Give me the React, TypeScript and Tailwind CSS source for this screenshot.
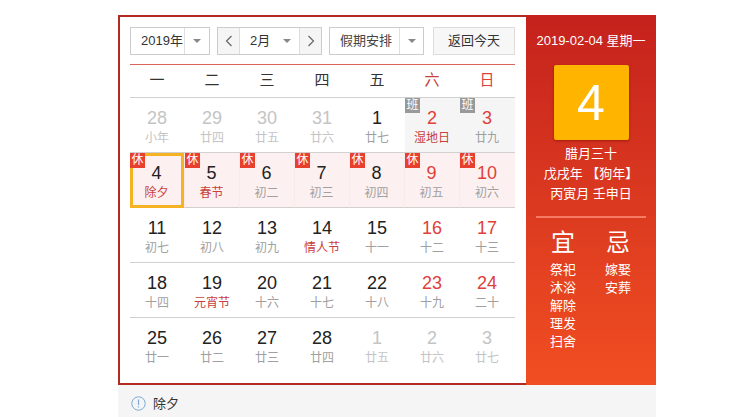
import React from "react";

type D = { n: number; l: string; dim?: boolean; red?: boolean; lr?: boolean; ban?: boolean; xiu?: boolean; sel?: boolean };

const days: D[] = [
  { n: 28, l: "小年", dim: true }, { n: 29, l: "廿四", dim: true }, { n: 30, l: "廿五", dim: true }, { n: 31, l: "廿六", dim: true },
  { n: 1, l: "廿七" }, { n: 2, l: "湿地日", red: true, lr: true, ban: true }, { n: 3, l: "廿九", red: true, ban: true },
  { n: 4, l: "除夕", lr: true, xiu: true, sel: true }, { n: 5, l: "春节", lr: true, xiu: true }, { n: 6, l: "初二", xiu: true }, { n: 7, l: "初三", xiu: true },
  { n: 8, l: "初四", xiu: true }, { n: 9, l: "初五", red: true, xiu: true }, { n: 10, l: "初六", red: true, xiu: true },
  { n: 11, l: "初七" }, { n: 12, l: "初八" }, { n: 13, l: "初九" }, { n: 14, l: "情人节", lr: true }, { n: 15, l: "十一" }, { n: 16, l: "十二", red: true }, { n: 17, l: "十三", red: true },
  { n: 18, l: "十四" }, { n: 19, l: "元宵节", lr: true }, { n: 20, l: "十六" }, { n: 21, l: "十七" }, { n: 22, l: "十八" }, { n: 23, l: "十九", red: true }, { n: 24, l: "二十", red: true },
  { n: 25, l: "廿一" }, { n: 26, l: "廿二" }, { n: 27, l: "廿三" }, { n: 28, l: "廿四" }, { n: 1, l: "廿五", dim: true }, { n: 2, l: "廿六", dim: true }, { n: 3, l: "廿七", dim: true },
];

const Caret = () => <span className="w-0 h-0 border-x-[4px] border-x-transparent border-t-[4px] border-t-[#888]" />;

function Cell({ d, i }: { d: D; i: number }) {
  const row = Math.floor(i / 7);
  const bg = d.xiu ? "bg-[#fdf0f0]" : d.ban ? "bg-[#f5f5f5]" : "bg-white";
  const num = d.dim ? "text-[#c4c4c4]" : d.red ? "text-[#e0403a]" : "text-[#222]";
  const lab = d.dim ? "text-[#c4c4c4]" : d.lr ? "text-[#c9403c]" : "text-[#a0a0a0]";
  return (
    <div className={`relative h-[55px] flex flex-col items-center pt-[10px] pr-[1px] ${bg} ${row < 4 ? "border-b border-[#d0d0d0]" : ""} ${d.xiu && i % 7 !== 6 ? "border-r border-r-[#fbeaea]" : ""}`}>
      <div className={`text-[18px] leading-[21px] ${num}`}>{d.n}</div>
      <div className={`text-[12px] leading-[16px] mt-[1px] whitespace-nowrap ${lab}`}>{d.l}</div>
      {d.sel && <div className="absolute left-0 top-0 w-[54px] h-[55px] border-[3px] border-[#f5b324]" />}
      {d.xiu && <div className="absolute left-0 top-0 w-[15px] h-[15px] bg-[#e8402f] text-white text-[12px] leading-[15px] text-center">休</div>}
      {d.ban && <div className="absolute left-0 top-0 w-[15px] h-[15px] bg-[#999] text-white text-[12px] leading-[15px] text-center">班</div>}
    </div>
  );
}

export default function App() {
  return (
    <div className="w-[746px] h-[417px] overflow-hidden bg-white pt-[15px] pl-[118px] font-['Liberation_Sans','Noto_Sans_CJK_SC',sans-serif]">
      <div className="w-[538px] flex h-[370px]">
        <div className="w-[408px] h-[370px] border-2 border-r-0 border-[#b22a22] pl-[10px] pr-[11px] pt-[10px]">
          <div className="h-[28px] flex items-stretch text-[13px] text-[#333]">
            <div className="w-[80px] flex border border-[#ccc] bg-white">
              <div className="w-[54px] pl-[10px] whitespace-nowrap leading-[26px] border-r border-[#e0e0e0]">2019年</div>
              <div className="flex-1 flex items-center justify-center"><Caret /></div>
            </div>
            <div className="ml-[7px] w-[105px] flex border border-[#ccc] bg-white">
              <div className="w-[22px] bg-[#f5f5f5] border-r border-[#ddd] flex items-center justify-center">
                <svg width="8" height="12" viewBox="0 0 8 12" fill="none" stroke="#666" strokeWidth="1.2"><path d="M6.5 1 1.500 6l5 5" /></svg>
              </div>
              <div className="flex-1 flex items-center pl-[10px] gap-[13px]"><span className="w-[20px] whitespace-nowrap leading-[26px]">2月</span><Caret /></div>
              <div className="w-[22px] bg-[#f5f5f5] border-l border-[#ddd] flex items-center justify-center">
                <svg width="8" height="12" viewBox="0 0 8 12" fill="none" stroke="#666" strokeWidth="1.2"><path d="M1.5 1 6.500 6l-5 5" /></svg>
              </div>
            </div>
            <div className="ml-[7px] w-[95px] flex border border-[#ccc] bg-white">
              <div className="w-[70px] pl-[10px] whitespace-nowrap leading-[26px] border-r border-[#e0e0e0] text-[#444]">假期安排</div>
              <div className="flex-1 flex items-center justify-center"><Caret /></div>
            </div>
            <div className="ml-[9px] w-[82px] border border-[#ddd] bg-[#f7f7f7] text-center leading-[26px]">返回今天</div>
          </div>
          <div className="mt-[9px] border-t border-[#d9655c] border-b border-b-[#d0d0d0] h-[34px] grid grid-cols-7 text-[15px] text-center leading-[30px] text-[#333]">
            {["一", "二", "三", "四", "五"].map((w) => <div key={w} className="pr-[1px]">{w}</div>)}
            <div className="pr-[1px] text-[#c9403c]">六</div>
            <div className="pr-[1px] text-[#e0403a]">日</div>
          </div>
          <div className="grid grid-cols-7">
            {days.map((d, i) => <Cell key={i} d={d} i={i} />)}
          </div>
        </div>
        <div className="w-[130px] h-[370px] bg-gradient-to-b from-[#c5211d] to-[#f14e22] text-white flex flex-col items-center">
          <div className="mt-[18px] text-[13px] leading-[16px] whitespace-nowrap">2019-02-04 星期一</div>
          <div className="mt-[16px] w-[75px] h-[75px] rounded-[2px] bg-[#ffb400] shadow-[0_1px_3px_rgba(120,0,0,0.5)] flex items-center justify-center text-[50px] leading-none">4</div>
          <div className="mt-[4px] text-[13px] leading-[20px] text-center whitespace-nowrap">
            <div>腊月三十</div>
            <div>戊戌年 【狗年】</div>
            <div>丙寅月 壬申日</div>
          </div>
          <div className="mt-[12px] w-[110px] h-[2px] bg-[#f77a64]" />
          <div className="mt-[11px] w-[110px] flex pl-[13px] gap-[27px]">
            <div className="w-[28px] flex flex-col items-center">
              <div className="text-[24px] leading-[28px] mb-[4px]">宜</div>
              {["祭祀", "沐浴", "解除", "理发", "扫舍"].map((t) => <div key={t} className="text-[13px] leading-[18px] whitespace-nowrap">{t}</div>)}
            </div>
            <div className="w-[28px] flex flex-col items-center">
              <div className="text-[24px] leading-[28px] mb-[4px]">忌</div>
              {["嫁娶", "安葬"].map((t) => <div key={t} className="text-[13px] leading-[18px] whitespace-nowrap">{t}</div>)}
            </div>
          </div>
        </div>
      </div>
      <div className="w-[538px] h-[32px] bg-[#f5f5f5] flex items-center pt-[5px] pl-[13px] gap-[7px] text-[13px] text-[#333]">
        <svg width="15" height="15" viewBox="0 0 15 15" fill="none">
          <circle cx="7.500" cy="7.500" r="6.700" stroke="#7fa9d6" strokeWidth="1" />
          <path d="M7.500 3.500v5.500M7.500 10.300v1.300" stroke="#7fa9d6" strokeWidth="1.200" />
        </svg>
        <span>除夕</span>
      </div>
    </div>
  );
}
